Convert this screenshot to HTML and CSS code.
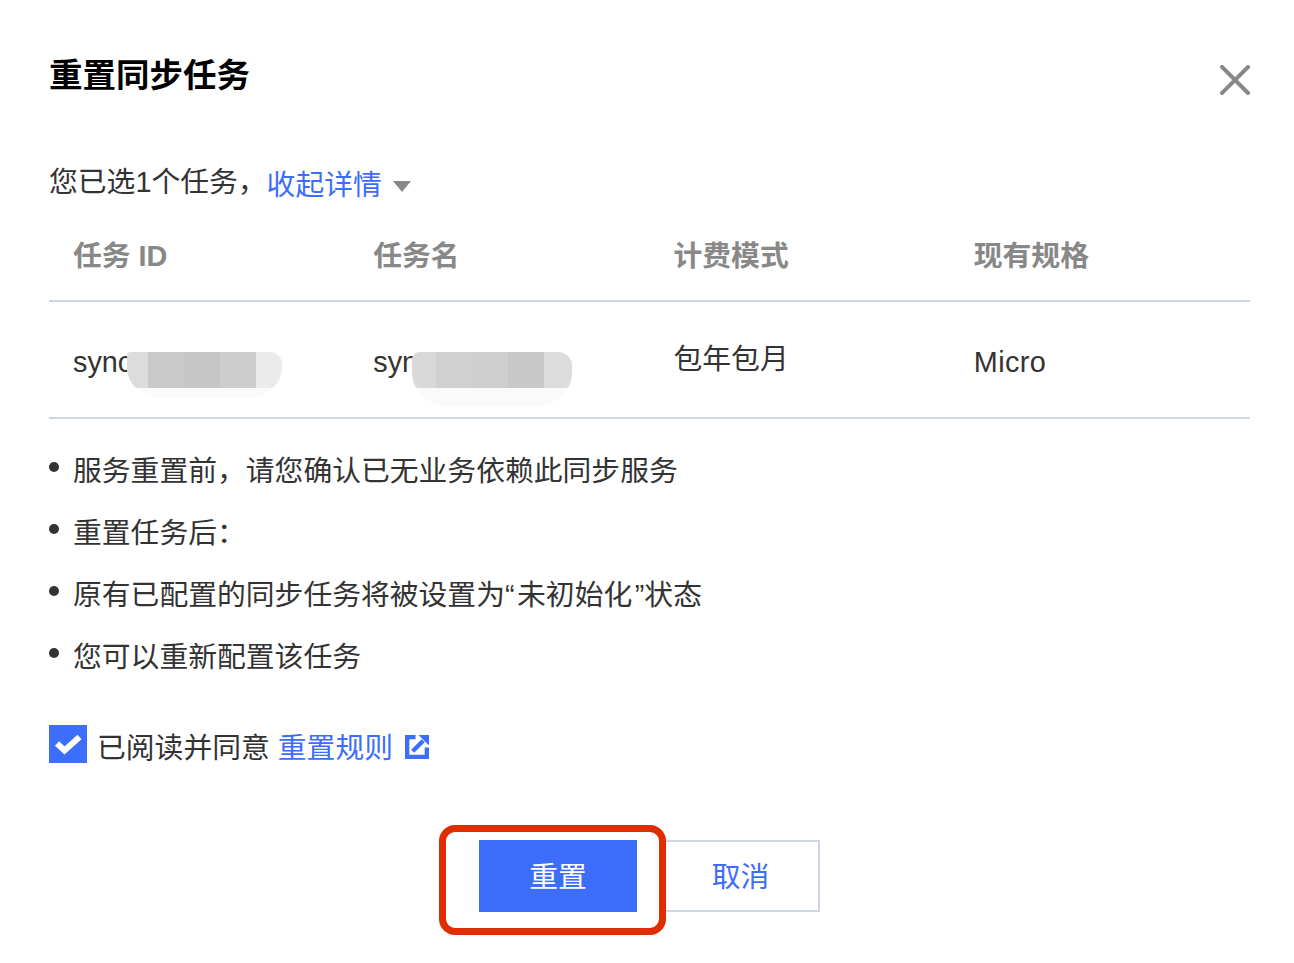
FILE: index.html
```html
<!DOCTYPE html>
<html lang="zh-CN">
<head>
  <meta charset="UTF-8">
  <meta name="viewport" content="width=device-width, initial-scale=1.0">
  <title>重置同步任务</title>
  <link rel="stylesheet" href="styles.css">
</head>
<body>
<div class="dialog">
  <div class="dialog-head">
    <h1>重置同步任务</h1>
    <button class="close-button" aria-label="关闭">
      <svg width="30" height="30" viewBox="0 0 30 30"><path d="M2 2L28 28M28 2L2 28" stroke="#888" stroke-width="4" fill="none" stroke-linecap="square"/></svg>
    </button>
  </div>

  <div class="summary">
    <span>您已选1个任务，</span><a class="link toggle">收起详情</a><span class="caret"></span>
  </div>

  <table class="task-table">
    <thead>
      <tr><th>任务 ID</th><th>任务名</th><th>计费模式</th><th>现有规格</th></tr>
    </thead>
    <tbody>
      <tr>
        <td><div class="masked">sync<span class="mask mask-one"><i></i><i></i><i></i><i></i><i></i></span></div></td>
        <td><div class="masked">sync<span class="mask mask-two"><i></i><i></i><i></i><i></i><i></i></span></div></td>
        <td class="cell-raised">包年包月</td>
        <td class="cell-spec">Micro</td>
      </tr>
    </tbody>
  </table>

  <ul class="notes">
    <li>服务重置前，请您确认已无业务依赖此同步服务</li>
    <li>重置任务后：</li>
    <li>原有已配置的同步任务将被设置为<span class="quote-open">“</span>未初始化<span class="quote-close">”</span>状态</li>
    <li>您可以重新配置该任务</li>
  </ul>

  <div class="agree">
    <span class="checkbox">
      <svg width="38" height="38" viewBox="0 0 38 38"><path d="M8 18.500L15.500 25.500L30.500 12" stroke="#fff" stroke-width="6" fill="none"/></svg>
    </span>
    <span class="agree-text">已阅读并同意</span>
    <a class="link rule-link">重置规则</a>
    <svg class="out-icon" width="24" height="24" viewBox="0 0 25 25">
      <path fill="#3d6dfb" d="M0 0H11V4.500H4.500V20.500H20.500V13H25V25H0ZM14 0H25V11Z"/>
      <path stroke="#3d6dfb" stroke-width="4.500" fill="none" d="M8 17L19 6"/>
    </svg>
  </div>

  <div class="actions">
    <div class="primary-wrap">
      <button class="btn btn-primary">重置</button>
      <span class="highlight"></span>
    </div>
    <button class="btn btn-default">取消</button>
  </div>
</div>
</body>
</html>
```

FILE: styles.css
```css
body {
  margin: 0;
  background: #fff;
  color: #333;
  font-family: "Liberation Sans", "Noto Sans CJK SC", sans-serif;
  font-size: 28.8px;
}
.dialog {
  width: 1201px;
  padding: 51px 44px 60px 49px;
}
.dialog-head {
  display: flex;
  justify-content: space-between;
  align-items: flex-start;
}
h1 {
  margin: 0;
  font-size: 33.5px;
  line-height: 50px;
  color: #000;
}
.close-button {
  margin: 14px 0 0 0;
  padding: 0;
  background: none;
  border: none;
  display: block;
}
.close-button svg {
  display: block;
}
.summary {
  display: flex;
  align-items: center;
  margin-top: 48px;
  height: 60px;
}
.link {
  color: #3d6dfb;
}
.toggle {
  margin-top: 6px;
}
.caret {
  width: 0;
  height: 0;
  margin: 14px 0 0 11px;
  border-left: 9px solid transparent;
  border-right: 9px solid transparent;
  border-top: 11px solid #888;
}
.task-table {
  width: 1201px;
  table-layout: fixed;
  border-collapse: collapse;
}
th {
  height: 88px;
  padding: 0 24px 3px;
  text-align: left;
  font-weight: bold;
  color: #888;
  border-bottom: 2px solid #cfd5e3;
  vertical-align: middle;
}
td {
  height: 111px;
  padding: 4px 24px 0;
  border-bottom: 2px solid #cfd5e3;
  line-height: 40px;
}
td.cell-raised {
  padding: 0 24px 2px;
}
td.cell-spec {
  letter-spacing: 0.4px;
}
.masked {
  position: relative;
  white-space: nowrap;
}
.mask {
  position: absolute;
  top: 10px;
  display: flex;
  overflow: hidden;
  background: #fafafa;
}
.mask-one {
  left: 54px;
  width: 155px;
  height: 46px;
  border-radius: 4px 12px 36px 36px / 4px 12px 30px 30px;
}
.mask-two {
  left: 39px;
  width: 160px;
  height: 55px;
  border-radius: 8px 14px 40px 40px / 8px 14px 34px 34px;
}
.mask i {
  display: block;
  width: 36px;
  height: 36px;
}
.mask-one i:nth-child(1) {
  width: 21px;
  background: #dcdcdc;
}
.mask-one i:nth-child(2) {
  background: #c9c9c9;
}
.mask-one i:nth-child(3) {
  background: #c6c6c6;
}
.mask-one i:nth-child(4) {
  background: #cdcdcd;
}
.mask-one i:nth-child(5) {
  width: 26px;
  background: #ebebeb;
}
.mask-two i:nth-child(1) {
  width: 24px;
  background: #d9d9d9;
}
.mask-two i:nth-child(2) {
  background: #d0d0d0;
}
.mask-two i:nth-child(3) {
  background: #cecece;
}
.mask-two i:nth-child(4) {
  background: #c8c8c8;
}
.mask-two i:nth-child(5) {
  width: 28px;
  background: #dcdcdc;
}
.notes {
  list-style: none;
  margin: 21px 0 0;
  padding: 0;
}
.notes li {
  position: relative;
  height: 62px;
  padding-left: 24px;
  line-height: 62px;
}
.notes li::before {
  content: "";
  position: absolute;
  left: 0;
  top: 22px;
  width: 10px;
  height: 10px;
  border-radius: 50%;
  background: #333;
}
.quote-open {
  margin-right: 2.5px;
}
.quote-close {
  margin-left: 2.5px;
}
.agree {
  display: flex;
  align-items: center;
  margin-top: 37px;
  height: 38px;
}
.checkbox {
  display: block;
  width: 38px;
  height: 38px;
  margin-right: 10px;
  background: #3d6dfb;
}
.checkbox svg {
  display: block;
}
.agree-text {
  margin-top: 2px;
}
.rule-link {
  margin: 2px 0 0 8px;
}
.out-icon {
  margin: 6px 0 0 12px;
}
.actions {
  display: flex;
  justify-content: center;
  gap: 24px;
  margin-top: 77px;
}
.primary-wrap {
  position: relative;
}
.btn {
  display: block;
  box-sizing: border-box;
  width: 158px;
  height: 72px;
  padding: 0 0 3px;
  font-family: inherit;
  font-size: 28.8px;
}
.btn-primary {
  background: #3d6dfb;
  border: none;
  color: #fff;
}
.btn-default {
  width: 159px;
  background: #fff;
  border: 2px solid #cfd5e3;
  color: #3d6dfb;
}
.highlight {
  position: absolute;
  left: -40px;
  top: -15px;
  width: 227px;
  height: 110px;
  border: 7px solid #e02d00;
  border-radius: 16px;
  box-sizing: border-box;
}
```
